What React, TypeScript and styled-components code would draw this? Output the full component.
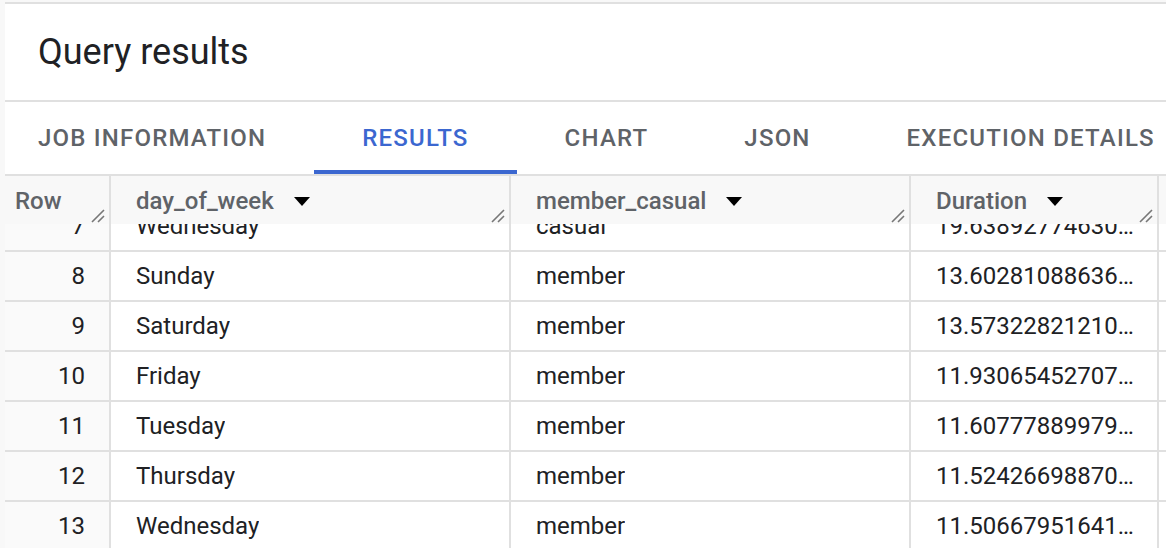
import * as React from "react";
import styled, { createGlobalStyle } from "styled-components";

const GlobalStyle = createGlobalStyle`
  html, body {
    margin: 0;
    padding: 0;
    height: 100%;
    overflow: hidden;
    background: #f8f8f8;
    font-family: Roboto, "Liberation Sans", Arial, sans-serif;
  }
  #root {
    height: 100%;
  }
`;

const Page = styled.div`
  display: flex;
  height: 100%;
  padding: 2px 0 0 5px;
  box-sizing: border-box;
`;

const Panel = styled.div`
  flex: 1;
  min-width: 0;
  background: #fff;
  border-top: 2px solid #e0e0e0;
  overflow: hidden;
  display: flex;
  flex-direction: column;
`;

const TitleBar = styled.div`
  height: 96px;
  display: flex;
  align-items: center;
  padding-left: 33px;
  border-bottom: 2px solid #e0e0e0;
  font-size: 36px;
  color: #202124;
`;

const TabBar = styled.div`
  display: flex;
  height: 72px;
  margin-left: -15px;
  border-bottom: 2px solid #e0e0e0;
`;

const Tab = styled.div<{ $active?: boolean }>`
  flex: none;
  display: flex;
  align-items: center;
  padding: 4px 48px 0;
  box-sizing: border-box;
  font-size: 24px;
  font-weight: 500;
  letter-spacing: 1.2px;
  text-transform: uppercase;
  white-space: nowrap;
  color: ${(p) => (p.$active ? "#3b67d0" : "#5f6368")};
  border-bottom: 4px solid ${(p) => (p.$active ? "#3b67d0" : "transparent")};
`;

const Table = styled.div`
  flex: 1;
  overflow: hidden;
`;

const COLUMNS = "104px 400px 400px 248px 1fr";

const HeaderRow = styled.div`
  position: relative;
  z-index: 1;
  display: grid;
  grid-template-columns: ${COLUMNS};
  height: 48px;
  background: #f8f8f8;
`;

const HeaderCell = styled.div<{ $first?: boolean }>`
  position: relative;
  display: flex;
  align-items: center;
  gap: 20px;
  padding-left: ${(p) => (p.$first ? "10px" : "25px")};
  padding-top: 2px;
  border-left: ${(p) => (p.$first ? "none" : "2px solid #e0e0e0")};
  font-size: 24px;
  font-weight: 500;
  color: #5f6368;
  white-space: nowrap;
`;

const Handle = styled.svg`
  position: absolute;
  right: 4px;
  bottom: 1px;
`;

const Body = styled.div`
  margin-top: -22px;
`;

const Row = styled.div`
  display: grid;
  grid-template-columns: ${COLUMNS};
  height: 50px;
  border-bottom: 2px solid #e0e0e0;
  box-sizing: border-box;
`;

const Cell = styled.div<{ $num?: boolean; $tight?: boolean }>`
  display: flex;
  align-items: center;
  justify-content: ${(p) => (p.$num ? "flex-end" : "flex-start")};
  padding: ${(p) =>
    p.$num ? "0 24px 0 0" : p.$tight ? "0 12px 0 25px" : "0 24px 0 25px"};
  border-left: ${(p) => (p.$num ? "none" : "2px solid #e0e0e0")};
  background: ${(p) => (p.$num ? "#fafafa" : "#fff")};
  font-size: 24px;
  color: #202124;
  min-width: 0;
`;

const Clip = styled.span`
  overflow: hidden;
  white-space: nowrap;
  text-overflow: ellipsis;
  min-width: 0;
`;

const SortArrow = () => (
  <svg width="16" height="9" viewBox="0 0 16 9">
    <path d="M0 0 L16 0 L8 9 Z" fill="#000" />
  </svg>
);

const ResizeHandle = () => (
  <Handle width="14" height="14" viewBox="0 0 14 14">
    <path d="M1 13 L13 1 M7 13 L13 7" stroke="#777" strokeWidth="1.6" fill="none" />
  </Handle>
);

const tabs = ["Job information", "Results", "Chart", "JSON", "Execution details"];

const rows = [
  [7, "Wednesday", "casual", "19.638927746300512"],
  [8, "Sunday", "member", "13.602810886362141"],
  [9, "Saturday", "member", "13.573228212103578"],
  [10, "Friday", "member", "11.930654527071254"],
  [11, "Tuesday", "member", "11.607778899793386"],
  [12, "Thursday", "member", "11.524266988702317"],
  [13, "Wednesday", "member", "11.506679516412094"],
];

export default function App() {
  return (
    <>
      <GlobalStyle />
      <Page>
        <Panel>
          <TitleBar>Query results</TitleBar>
          <TabBar>
            {tabs.map((t) => (
              <Tab key={t} $active={t === "Results"}>
                {t}
              </Tab>
            ))}
          </TabBar>
          <Table>
            <HeaderRow>
              <HeaderCell $first>
                Row
                <ResizeHandle />
              </HeaderCell>
              {["day_of_week", "member_casual", "Duration"].map((h) => (
                <HeaderCell key={h}>
                  {h}
                  <SortArrow />
                  <ResizeHandle />
                </HeaderCell>
              ))}
              <HeaderCell />
            </HeaderRow>
            <Body>
              {rows.map(([n, day, member, dur]) => (
                <Row key={n}>
                  <Cell $num>{n}</Cell>
                  <Cell>
                    <Clip>{day}</Clip>
                  </Cell>
                  <Cell>
                    <Clip>{member}</Clip>
                  </Cell>
                  <Cell $tight>
                    <Clip>{dur}</Clip>
                  </Cell>
                  <Cell />
                </Row>
              ))}
            </Body>
          </Table>
        </Panel>
      </Page>
    </>
  );
}
